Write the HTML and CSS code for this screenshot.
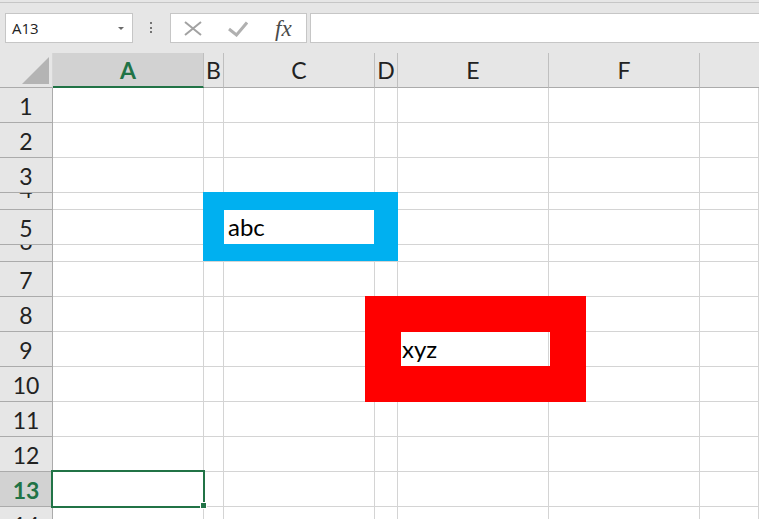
FILE: index.html
```html
<!DOCTYPE html>
<html>
<head>
<meta charset="utf-8">
<link rel="stylesheet" href="styles.css">
</head>
<body>
<div class="app">
  <div class="toolbar">
    <div class="namebox"><span class="namebox-text">A13</span><span class="caret"></span></div>
    <div class="dots"><i></i><i></i><i></i></div>
    <div class="fbtns">
      <svg class="ico-x" width="18" height="15" viewBox="0 0 18 15"><path d="M1 1L17 14M17 1L1 14" stroke="#a2a2a2" stroke-width="2" fill="none"/></svg>
      <svg class="ico-check" width="20" height="16" viewBox="0 0 20 16"><path d="M1 8L8.5 14L19 1.5" stroke="#b0b0b0" stroke-width="3" fill="none"/></svg>
      <span class="fx">fx</span>
    </div>
    <div class="finput"></div>
  </div>
  <div class="sheet">
    <div class="row head">
      <div class="corner"><span class="tri"></span></div>
      <div class="ch sel">A</div>
      <div class="ch">B</div>
      <div class="ch">C</div>
      <div class="ch">D</div>
      <div class="ch">E</div>
      <div class="ch">F</div>
      <div class="ch last"></div>
    </div>
    <div class="row"><div class="rh"><span>1</span></div><div class="c"></div><div class="c"></div><div class="c"></div><div class="c"></div><div class="c"></div><div class="c"></div><div class="c"></div></div>
    <div class="row"><div class="rh"><span>2</span></div><div class="c"></div><div class="c"></div><div class="c"></div><div class="c"></div><div class="c"></div><div class="c"></div><div class="c"></div></div>
    <div class="row"><div class="rh"><span>3</span></div><div class="c"></div><div class="c"></div><div class="c"></div><div class="c"></div><div class="c"></div><div class="c"></div><div class="c"></div></div>
    <div class="row short"><div class="rh"><span>4</span></div><div class="c"></div><div class="c"></div><div class="c"></div><div class="c"></div><div class="c"></div><div class="c"></div><div class="c"></div></div>
    <div class="row"><div class="rh"><span>5</span></div><div class="c"></div><div class="c"></div><div class="c"><span class="val">abc</span></div><div class="c"></div><div class="c"></div><div class="c"></div><div class="c"></div></div>
    <div class="row short"><div class="rh"><span>6</span></div><div class="c"></div><div class="c"></div><div class="c"></div><div class="c"></div><div class="c"></div><div class="c"></div><div class="c"></div></div>
    <div class="row"><div class="rh"><span>7</span></div><div class="c"></div><div class="c"></div><div class="c"></div><div class="c"></div><div class="c"></div><div class="c"></div><div class="c"></div></div>
    <div class="row"><div class="rh"><span>8</span></div><div class="c"></div><div class="c"></div><div class="c"></div><div class="c"></div><div class="c"></div><div class="c"></div><div class="c"></div></div>
    <div class="row"><div class="rh"><span>9</span></div><div class="c"></div><div class="c"></div><div class="c"></div><div class="c"></div><div class="c"><span class="val">xyz</span></div><div class="c"></div><div class="c"></div></div>
    <div class="row"><div class="rh"><span>10</span></div><div class="c"></div><div class="c"></div><div class="c"></div><div class="c"></div><div class="c"></div><div class="c"></div><div class="c"></div></div>
    <div class="row"><div class="rh"><span>11</span></div><div class="c"></div><div class="c"></div><div class="c"></div><div class="c"></div><div class="c"></div><div class="c"></div><div class="c"></div></div>
    <div class="row"><div class="rh"><span>12</span></div><div class="c"></div><div class="c"></div><div class="c"></div><div class="c"></div><div class="c"></div><div class="c"></div><div class="c"></div></div>
    <div class="row"><div class="rh sel"><span>13</span></div><div class="c"></div><div class="c"></div><div class="c"></div><div class="c"></div><div class="c"></div><div class="c"></div><div class="c"></div></div>
    <div class="row"><div class="rh"><span>14</span></div><div class="c"></div><div class="c"></div><div class="c"></div><div class="c"></div><div class="c"></div><div class="c"></div><div class="c"></div></div>

    <div class="frame frame-blue"></div>
    <div class="frame frame-red"></div>
    <div class="selection"><span class="handle"></span></div>
  </div>
</div>
</body>
</html>
```
FILE: styles.css
```css
html, body {
  margin: 0;
  padding: 0;
  overflow: hidden;
}

.app {
  width: 759px;
  height: 519px;
  overflow: hidden;
  background: #e6e6e6;
  font-family: Lato, "Liberation Sans", sans-serif;
  color: #222;
}

/* ---------- toolbar ---------- */
.toolbar {
  display: flex;
  align-items: flex-start;
  margin-top: 2px;
  border-top: 1px solid #c6c6c6;
  padding-top: 10px;
  height: 51px;
  box-sizing: border-box;
}

.namebox {
  margin-left: 5px;
  width: 128px;
  height: 30px;
  box-sizing: border-box;
  border: 1px solid #c6c6c6;
  background: #fff;
  display: flex;
  align-items: center;
  padding-left: 6px;
  padding-right: 8px;
  font-family: "Open Sans", "Noto Sans", sans-serif;
  font-size: 15px;
  line-height: 28px;
  color: #222;
}

.namebox-text {
  flex: 1;
}

.caret {
  width: 0;
  height: 0;
  border-left: 3px solid transparent;
  border-right: 3px solid transparent;
  border-top: 3px solid #6a6a6a;
}

.dots {
  margin-left: 17px;
  margin-top: 9px;
  display: flex;
  flex-direction: column;
  gap: 2.5px;
}

.dots i {
  display: block;
  width: 2px;
  height: 2px;
  background: #737373;
}

.fbtns {
  margin-left: 18px;
  width: 137px;
  height: 30px;
  box-sizing: border-box;
  border: 1px solid #c6c6c6;
  background: #fff;
  display: flex;
  align-items: flex-start;
}

.ico-x {
  display: block;
  margin-left: 13px;
  margin-top: 7px;
}

.ico-check {
  display: block;
  margin-left: 26px;
  margin-top: 7px;
}

.fx {
  margin-left: 27px;
  margin-top: 1px;
  font-family: "Liberation Serif", serif;
  font-style: italic;
  font-size: 23px;
  line-height: 28px;
  color: #4a4a4a;
}

.finput {
  flex: 1;
  margin-left: 3px;
  margin-right: -5px;
  height: 30px;
  box-sizing: border-box;
  border: 1px solid #c6c6c6;
  background: #fff;
}

/* ---------- sheet ---------- */
.sheet {
  position: relative;
}

.row {
  display: grid;
  grid-template-columns: 53px 151px 20px 151px 23px 151px 151px 1fr;
  height: 35px;
}

.row.short {
  height: 17px;
}

.row > div {
  box-sizing: border-box;
  overflow: hidden;
}

.corner {
  background: #e6e6e6;
  border-bottom: 1px solid #ababab;
  border-right: 1px solid #d6d6d6;
  display: flex;
  justify-content: flex-end;
  align-items: flex-start;
  padding: 4px 3px 0 0;
}

.tri {
  width: 0;
  height: 0;
  border-left: 27px solid transparent;
  border-bottom: 27px solid #b4b4b4;
}

.ch {
  background: #e6e6e6;
  border-right: 1px solid #bfbfbf;
  border-bottom: 1px solid #ababab;
  text-align: center;
  font-size: 23px;
  line-height: 34px;
  color: #222;
}

.ch.sel {
  background: #d2d2d2;
  color: #217346;
  font-weight: bold;
  border-bottom: 2px solid #217346;
}

.ch.last {
  border-right: none;
}

.rh {
  background: #e6e6e6;
  border-right: 1px solid #ababab;
  border-bottom: 1px solid #ababab;
  text-align: center;
  font-size: 23px;
  color: #222;
}

.rh span {
  display: block;
  line-height: 34px;
  margin-top: 1px;
}

.row.short .rh span {
  margin-top: -21px;
}

.rh.sel {
  background: #d2d2d2;
  color: #217346;
  font-weight: bold;
}

.c {
  background: #fff;
  border-right: 1px solid #d4d4d4;
  border-bottom: 1px solid #d4d4d4;
}

.val {
  display: block;
  padding-left: 4px;
  font-size: 24px;
  line-height: 33px;
  color: #000;
}

/* ---------- overlays ---------- */
.frame {
  position: absolute;
  box-sizing: border-box;
  border-style: solid;
  background: transparent;
}

.frame-blue {
  left: 203px;
  top: 139px;
  width: 195px;
  height: 69px;
  border-color: #00b0f0;
  border-width: 18px 24px 17px 21px;
}

.frame-red {
  left: 365px;
  top: 243px;
  width: 221px;
  height: 106px;
  border-color: #ff0000;
  border-width: 36px;
}

.selection {
  position: absolute;
  left: 51px;
  top: 417px;
  width: 154px;
  height: 38px;
  box-sizing: border-box;
  border: 2px solid #217346;
}

.handle {
  position: absolute;
  left: 148px;
  top: 31px;
  width: 5px;
  height: 5px;
  background: #217346;
  box-shadow: 0 0 0 1px #fff;
}
```
